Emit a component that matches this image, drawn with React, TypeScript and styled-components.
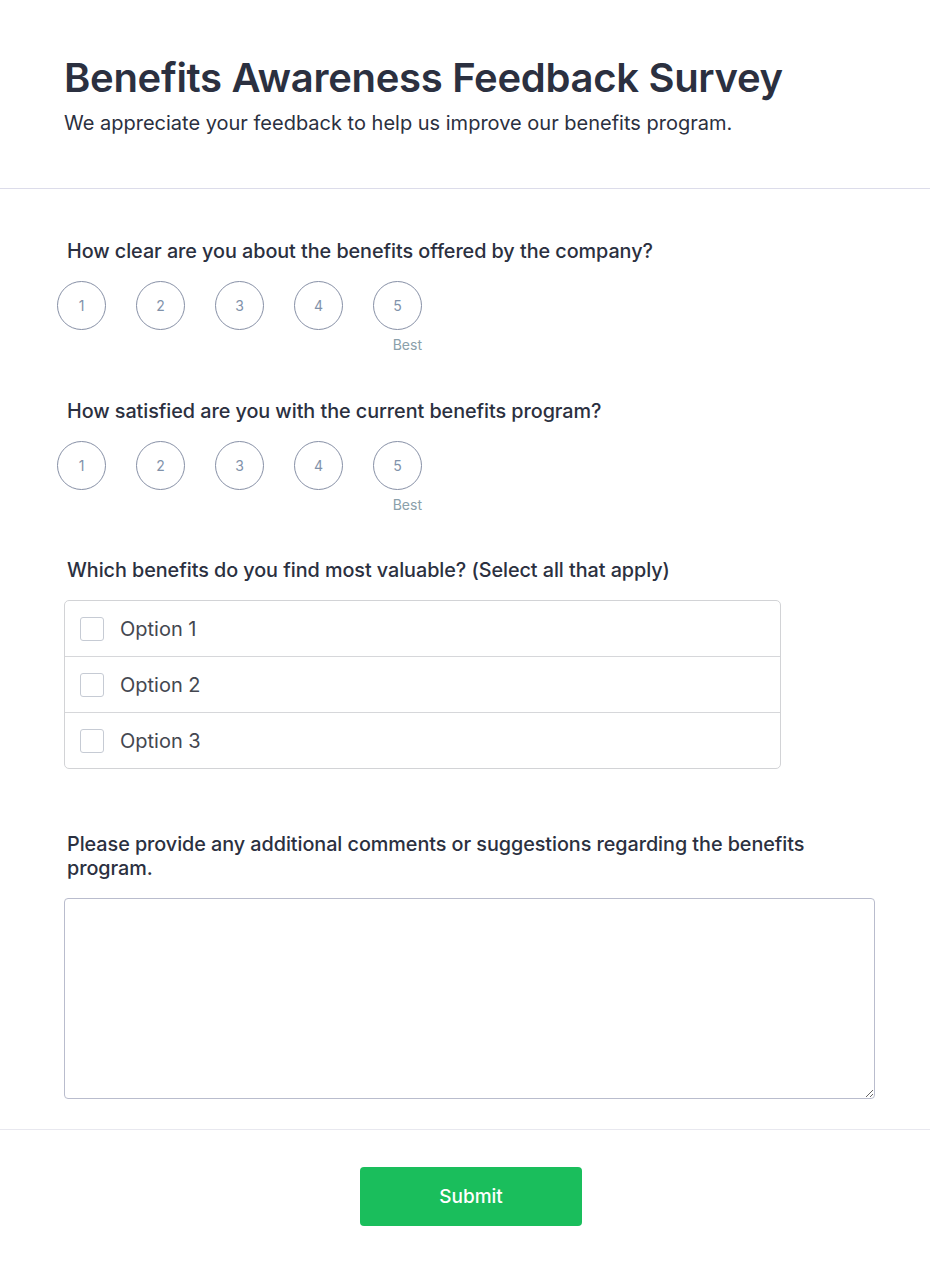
import React from "react";
import styled, { createGlobalStyle } from "styled-components";

const Global = createGlobalStyle`
  html, body { margin: 0; padding: 0; background: #fff; }
  body { font-family: Inter, "Noto Sans", sans-serif; color: #2d3142; }
  * { box-sizing: border-box; }
`;

const Page = styled.div`
  width: 930px;
  background: #fff;
`;

const Header = styled.header`
  padding: 54px 64px 0 64px;
  height: 189px;
  border-bottom: 1px solid #dcdcea;
`;

const Title = styled.h1`
  margin: 0;
  font-size: 40px;
  line-height: 48px;
  font-weight: 600;
  color: #2b3040;
  letter-spacing: -0.3px;
`;

const Subtitle = styled.p`
  margin: 8px 0 0 0;
  font-size: 20px;
  line-height: 26px;
  color: #2b3040;
`;

const Body = styled.main`
  padding: 50px 64px 30px 64px;
  border-bottom: 1px solid #e8e8ef;
  display: flex;
  flex-direction: column;
`;

const Question = styled.section<{ $gap?: number }>`
  display: flex;
  flex-direction: column;
  margin-bottom: ${(p) => p.$gap ?? 0}px;
`;

const Label = styled.div`
  padding-left: 3px;
  font-size: 19.8px;
  line-height: 24px;
  font-weight: 500;
  letter-spacing: -0.05px;
  color: #2b3040;
  margin-bottom: 18px;
`;

const Scale = styled.div`
  display: flex;
  gap: 30px;
  margin-left: -7px;
`;

const ScaleItem = styled.div`
  display: flex;
  flex-direction: column;
  align-items: flex-end;
  width: 49px;
`;

const Circle = styled.div`
  width: 49px;
  height: 49px;
  border-radius: 50%;
  border: 1px solid #8790a6;
  display: flex;
  align-items: center;
  justify-content: center;
  font-size: 14px;
  color: #8192aa;
`;

const Hint = styled.div`
  margin-top: 7px;
  font-size: 14px;
  line-height: 16px;
  color: #8aa0aa;
  height: 16px;
`;

const Options = styled.div`
  width: 717px;
  border: 1px solid #d2d3d6;
  border-radius: 5px;
`;

const OptionRow = styled.label`
  display: flex;
  align-items: center;
  gap: 16px;
  height: 56px;
  padding-left: 15px;
  border-top: 1px solid #d6d7da;
  &:first-child { border-top: none; height: 55px; }
`;

const Box = styled.span`
  width: 24px;
  height: 24px;
  border: 1px solid #c6cbd4;
  border-radius: 3px;
  background: #fff;
`;

const OptionText = styled.span`
  font-size: 20px;
  color: #444750;
`;

const TextArea = styled.textarea`
  width: 811px;
  height: 201px;
  border: 1px solid #b9bccd;
  border-radius: 4px;
  resize: vertical;
  font-family: inherit;
  font-size: 16px;
  margin: 0;
`;

const Footer = styled.footer`
  display: flex;
  justify-content: center;
  padding: 37px 0 50px 12px;
`;

const Submit = styled.button`
  width: 222px;
  height: 59px;
  border: none;
  border-radius: 4px;
  background: #1abe5c;
  color: #fff;
  font-family: inherit;
  font-size: 19px;
  font-weight: 500;
`;

const RatingQuestion = ({ text, gap }: { text: string; gap: number }) => (
  <Question $gap={gap}>
    <Label>{text}</Label>
    <Scale>
      {[1, 2, 3, 4, 5].map((n) => (
        <ScaleItem key={n}>
          <Circle>{n}</Circle>
          <Hint>{n === 5 ? "Best" : ""}</Hint>
        </ScaleItem>
      ))}
    </Scale>
  </Question>
);

export default function App() {
  return (
    <Page>
      <Global />
      <Header>
        <Title>Benefits Awareness Feedback Survey</Title>
        <Subtitle>We appreciate your feedback to help us improve our benefits program.</Subtitle>
      </Header>
      <Body>
        <RatingQuestion gap={46} text="How clear are you about the benefits offered by the company?" />
        <RatingQuestion gap={45} text="How satisfied are you with the current benefits program?" />
        <Question $gap={63}>
          <Label>Which benefits do you find most valuable? (Select all that apply)</Label>
          <Options>
            {["Option 1", "Option 2", "Option 3"].map((o) => (
              <OptionRow key={o}>
                <Box />
                <OptionText>{o}</OptionText>
              </OptionRow>
            ))}
          </Options>
        </Question>
        <Question>
          <Label>Please provide any additional comments or suggestions regarding the benefits program.</Label>
          <TextArea />
        </Question>
      </Body>
      <Footer>
        <Submit>Submit</Submit>
      </Footer>
    </Page>
  );
}
